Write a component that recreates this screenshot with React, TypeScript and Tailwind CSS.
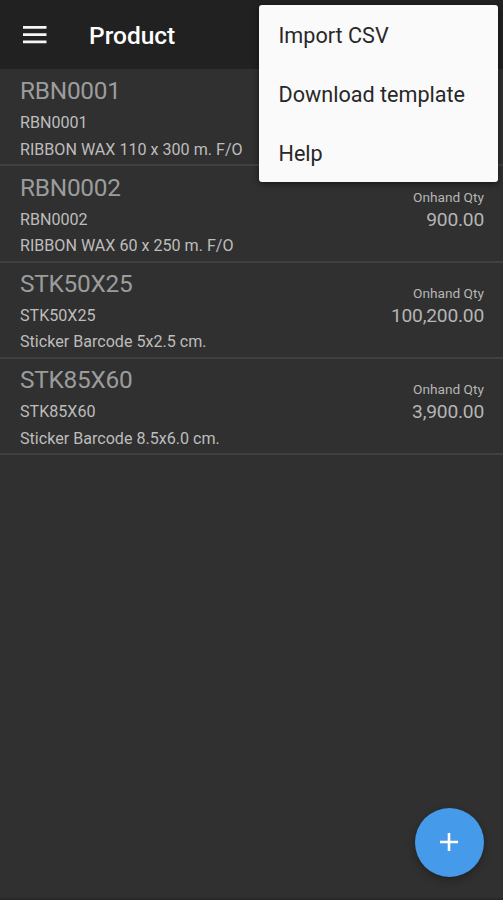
const products = [
  { code: "RBN0001", description: "RIBBON WAX 110 x 300 m. F/O" },
  { code: "RBN0002", description: "RIBBON WAX 60 x 250 m. F/O", qty: "900.00" },
  { code: "STK50X25", description: "Sticker Barcode 5x2.5 cm.", qty: "100,200.00" },
  { code: "STK85X60", description: "Sticker Barcode 8.5x6.0 cm.", qty: "3,900.00" },
];

const menuItems = ["Import CSV", "Download template", "Help"];

function Header() {
  return (
    <header className="flex h-[69px] shrink-0 items-center bg-[#212121] pl-[23px] pt-[1px]">
      <button aria-label="Open navigation">
        <svg width="24" height="18" viewBox="0 0 24 18" fill="#f5f5f5" className="block">
          <path d="M0 0h23.5v2.8H0zM0 7.2h23.5v2.8H0zM0 14.4h23.5v2.8H0z" />
        </svg>
      </button>
      <h1 className="ml-[42px] pt-[2px] text-[24.5px] leading-[30px] font-medium text-white">Product</h1>
    </header>
  );
}

function OverflowMenu() {
  return (
    <div className="absolute top-[5px] left-[259px] h-[177px] w-[239px] rounded-[3px] bg-[#fafafa] shadow-[0_2px_6px_rgba(0,0,0,0.5)]">
      {menuItems.map((item) => (
        <div key={item} className="flex h-[59px] items-center pl-[19.5px] pt-[3px] text-[21.6px] text-[#282828]">
          {item}
        </div>
      ))}
    </div>
  );
}

export default function App() {
  return (
    <div className="relative flex h-[900px] w-[503px] flex-col overflow-hidden border-b-2 border-[#2c262c] bg-[#303030] font-['Roboto',sans-serif]">
      <Header />

      <ul className="pt-px">
        {products.map((product) => (
          <li key={product.code} className="flex h-[96.33px] justify-between border-b-2 border-[#404040] pr-[19px] pl-5 whitespace-nowrap">
            <div className="pt-[5.4px] text-[#bdbdbd]">
              <div className="text-[24.4px] leading-[32px] tracking-[-0.25px] text-[#9c9c9c]">{product.code}</div>
              <div className="mt-[2.8px] text-[16.1px] leading-[26px]">{product.code}</div>
              <div className="mt-[0.5px] text-[16.1px] leading-[26px]">{product.description}</div>
            </div>
            {product.qty && (
              <div className="pt-[20.5px] text-right text-[#b5b5b5]">
                <div className="text-[13.7px] leading-[20px]">Onhand Qty</div>
                <div className="text-[19.2px] leading-[25px] tracking-[-0.2px]">{product.qty}</div>
              </div>
            )}
          </li>
        ))}
      </ul>

      <OverflowMenu />

      <button
        aria-label="Add product"
        className="absolute right-[19px] bottom-[21px] flex size-[69px] items-center justify-center rounded-full bg-[#459ae9] pr-px pb-px shadow-[0_3px_8px_rgba(0,0,0,0.3)]"
      >
        <svg width="18" height="18" viewBox="0 0 18 18" stroke="#fff" strokeWidth="2.6">
          <path d="M9 0v18M0 9h18" />
        </svg>
      </button>
    </div>
  );
}
